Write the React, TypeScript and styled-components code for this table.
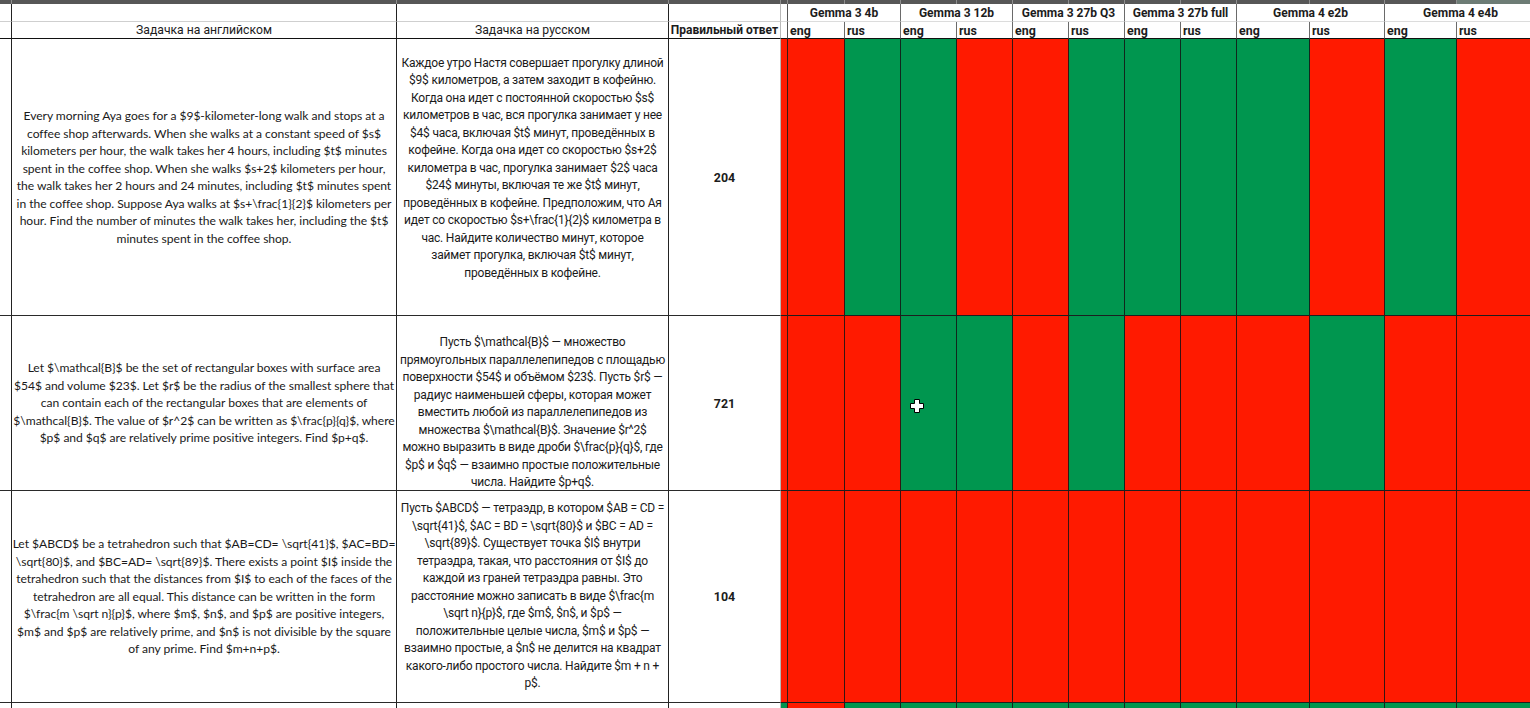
import React from "react";
import styled, { createGlobalStyle } from "styled-components";

const RED = "#ff1a00";
const GREEN = "#00964f";

const GlobalStyle = createGlobalStyle`
  html, body {
    margin: 0;
    padding: 0;
    background: #ffffff;
    overflow: hidden;
  }
  #root {
    width: 1530px;
    height: 708px;
    overflow: hidden;
  }
`;

// column widths, each includes its own 1px right border
const COLS = [12, 385, 272, 112, 7, 57, 56, 56, 56, 56, 56, 56, 56, 73, 75, 72, 80];

const Sheet = styled.div`
  position: relative;
  display: grid;
  grid-template-columns: ${COLS.map((w) => w + "px").join(" ")};
  grid-template-rows: 4px 18px 17px 277px 175px 212px 40px;
  width: max-content;
  color: #1c1c1c;
  font-family: "Roboto", "Liberation Sans", sans-serif;
  font-size: 12.2px;
`;

const Ruler = styled.div<{ $active?: boolean }>`
  background: ${(p) => (p.$active ? "#6d7c75" : "#575757")};
  border-right: 1px solid #8e8e8e;
`;

const EdgeCell = styled.div<{ $line?: string }>`
  box-sizing: border-box;
  border-right: 1px solid #222;
  border-bottom: 1px solid ${(p) => p.$line || "#2a2a2a"};
`;

const HeadCell = styled.div<{ $line?: string; $bold?: boolean; $edge?: string }>`
  box-sizing: border-box;
  display: flex;
  align-items: center;
  justify-content: center;
  white-space: nowrap;
  overflow: hidden;
  font-weight: ${(p) => (p.$bold ? 700 : 400)};
  font-size: ${(p) => (p.$bold ? "12px" : "12.2px")};
  border-right: 1px solid ${(p) => p.$edge || "#222"};
  border-bottom: 1px solid ${(p) => p.$line || "#cfcfcf"};
`;

const GroupCell = styled.div`
  box-sizing: border-box;
  grid-column: span 2;
  display: flex;
  align-items: center;
  justify-content: center;
  white-space: nowrap;
  font-weight: 700;
  font-size: 12px;
  border-right: 1px solid #6a6a6a;
  border-bottom: 1px solid #dcdcdc;
`;

const SubCell = styled.div`
  box-sizing: border-box;
  display: flex;
  align-items: center;
  padding-left: 2px;
  font-weight: 700;
  font-size: 12.4px;
  border-right: 1px solid #6a6a6a;
  border-bottom: 1px solid #111;
`;

const TextCell = styled.div<{ $lang: "en" | "ru"; $offset?: number }>`
  box-sizing: border-box;
  display: flex;
  flex-direction: column;
  align-items: center;
  justify-content: center;
  overflow: hidden;
  text-align: center;
  line-height: 17.5px;
  font-family: ${(p) =>
    p.$lang === "en"
      ? `"Lato", "Carlito", "Liberation Sans", sans-serif`
      : `"Roboto", "Liberation Sans", sans-serif`};
  font-size: ${(p) => (p.$lang === "en" ? "12.1px" : "12px")};
  letter-spacing: ${(p) => (p.$lang === "en" ? "-0.04px" : "-0.2px")};
  color: #1a1a1a;
  padding-top: ${(p) => Math.max(0, (p.$offset || 0) * 2)}px;
  padding-bottom: ${(p) => Math.max(0, -(p.$offset || 0) * 2)}px;
  border-right: 1px solid #222;
  border-bottom: 1px solid #2a2a2a;
`;

const Line = styled.span`
  display: block;
  white-space: nowrap;
`;

const AnswerCell = styled.div`
  box-sizing: border-box;
  display: flex;
  align-items: center;
  justify-content: center;
  font-weight: 700;
  font-size: 12.4px;
  border-right: 1px solid #b9b9b9;
  border-bottom: 1px solid #2a2a2a;
`;

const MarkCell = styled.div<{ $ok: boolean }>`
  box-sizing: border-box;
  background: ${(p) => (p.$ok ? GREEN : RED)};
  border-right: 1px solid #3a1a12;
  border-bottom: 1px solid #1e1e1e;
`;

const ResultCell = styled.div<{ $ok: boolean }>`
  box-sizing: border-box;
  background: ${(p) => (p.$ok ? GREEN : RED)};
  border-right: 1px solid rgba(20, 20, 20, 0.85);
  border-bottom: 1px solid #1e1e1e;
`;

const Cursor = styled.svg`
  position: absolute;
  left: 909px;
  top: 398px;
  width: 16px;
  height: 16px;
  pointer-events: none;
`;

const models = [
  "Gemma 3 4b",
  "Gemma 3 12b",
  "Gemma 3 27b Q3",
  "Gemma 3 27b full",
  "Gemma 4 e2b",
  "Gemma 4 e4b",
];

type Task = {
  en: string[];
  ru: string[];
  ruOffset?: number;
  answer: string;
  mark: boolean;
  results: number[];
};

const tasks: Task[] = [
  {
    en: [
      "Every morning Aya goes for a $9$-kilometer-long walk and stops at a",
      "coffee shop afterwards. When she walks at a constant speed of $s$",
      "kilometers per hour, the walk takes her 4 hours, including $t$ minutes",
      "spent in the coffee shop. When she walks $s+2$ kilometers per hour,",
      "the walk takes her 2 hours and 24 minutes, including $t$ minutes spent",
      "in the coffee shop. Suppose Aya walks at $s+\\frac{1}{2}$ kilometers per",
      "hour. Find the number of minutes the walk takes her, including the $t$",
      "minutes spent in the coffee shop.",
    ],
    ru: [
      "Каждое утро Настя совершает прогулку длиной",
      "$9$ километров, а затем заходит в кофейню.",
      "Когда она идет с постоянной скоростью $s$",
      "километров в час, вся прогулка занимает у нее",
      "$4$ часа, включая $t$ минут, проведённых в",
      "кофейне. Когда она идет со скоростью $s+2$",
      "километра в час, прогулка занимает $2$ часа",
      "$24$ минуты, включая те же $t$ минут,",
      "проведённых в кофейне. Предположим, что Ая",
      "идет со скоростью $s+\\frac{1}{2}$ километра в",
      "час. Найдите количество минут, которое",
      "займет прогулка, включая $t$ минут,",
      "проведённых в кофейне.",
    ],
    ruOffset: -8.5,
    answer: "204",
    mark: false,
    results: [0, 1, 1, 0, 0, 1, 1, 1, 1, 0, 1, 0],
  },
  {
    en: [
      "Let $\\mathcal{B}$ be the set of rectangular boxes with surface area",
      "$54$ and volume $23$. Let $r$ be the radius of the smallest sphere that",
      "can contain each of the rectangular boxes that are elements of",
      "$\\mathcal{B}$. The value of $r^2$ can be written as $\\frac{p}{q}$, where",
      "$p$ and $q$ are relatively prime positive integers. Find $p+q$.",
    ],
    ru: [
      "Пусть $\\mathcal{B}$ — множество",
      "прямоугольных параллелепипедов с площадью",
      "поверхности $54$ и объёмом $23$. Пусть $r$ —",
      "радиус наименьшей сферы, которая может",
      "вместить любой из параллелепипедов из",
      "множества $\\mathcal{B}$. Значение $r^2$",
      "можно выразить в виде дроби $\\frac{p}{q}$, где",
      "$p$ и $q$ — взаимно простые положительные",
      "числа. Найдите $p+q$.",
    ],
    ruOffset: 10,
    answer: "721",
    mark: false,
    results: [0, 0, 1, 1, 0, 1, 0, 0, 0, 1, 0, 0],
  },
  {
    en: [
      "Let $ABCD$ be a tetrahedron such that $AB=CD= \\sqrt{41}$, $AC=BD=",
      "\\sqrt{80}$, and $BC=AD= \\sqrt{89}$. There exists a point $I$ inside the",
      "tetrahedron such that the distances from $I$ to each of the faces of the",
      "tetrahedron are all equal. This distance can be written in the form",
      "$\\frac{m \\sqrt n}{p}$, where $m$, $n$, and $p$ are positive integers,",
      "$m$ and $p$ are relatively prime, and $n$ is not divisible by the square",
      "of any prime. Find $m+n+p$.",
    ],
    ru: [
      "Пусть $ABCD$ — тетраэдр, в котором $AB = CD =",
      "\\sqrt{41}$, $AC = BD = \\sqrt{80}$ и $BC = AD =",
      "\\sqrt{89}$. Существует точка $I$ внутри",
      "тетраэдра, такая, что расстояния от $I$ до",
      "каждой из граней тетраэдра равны. Это",
      "расстояние можно записать в виде $\\frac{m",
      "\\sqrt n}{p}$, где $m$, $n$, и $p$ —",
      "положительные целые числа, $m$ и $p$ —",
      "взаимно простые, а $n$ не делится на квадрат",
      "какого-либо простого числа. Найдите $m + n +",
      "p$.",
    ],
    answer: "104",
    mark: false,
    results: [0, 0, 0, 0, 0, 0, 0, 0, 0, 0, 0, 0],
  },
  {
    en: [],
    ru: [],
    answer: "",
    mark: true,
    results: [0, 1, 1, 1, 1, 1, 1, 1, 1, 1, 1, 1],
  },
];

const TaskRow: React.FC<{ task: Task }> = ({ task }) => (
  <>
    <EdgeCell />
    <TextCell $lang="en">
      {task.en.map((l, i) => (
        <Line key={i}>{l}</Line>
      ))}
    </TextCell>
    <TextCell $lang="ru" $offset={task.ruOffset}>
      {task.ru.map((l, i) => (
        <Line key={i}>{l}</Line>
      ))}
    </TextCell>
    <AnswerCell>{task.answer}</AnswerCell>
    <MarkCell $ok={task.mark} />
    {task.results.map((r, i) => (
      <ResultCell key={i} $ok={r === 1} />
    ))}
  </>
);

export default function App() {
  return (
    <>
      <GlobalStyle />
      <Sheet>
        {COLS.map((_, i) => (
          <Ruler key={i} $active={i === COLS.length - 1} />
        ))}

        <EdgeCell $line="#cfcfcf" />
        <HeadCell />
        <HeadCell />
        <HeadCell $edge="#b9b9b9" />
        <HeadCell $edge="#555" $line="#dcdcdc" />
        {models.map((m) => (
          <GroupCell key={m}>{m}</GroupCell>
        ))}

        <EdgeCell $line="#111" />
        <HeadCell $line="#111">Задачка на английском</HeadCell>
        <HeadCell $line="#111">Задачка на русском</HeadCell>
        <HeadCell $line="#111" $bold $edge="#b9b9b9">
          Правильный ответ
        </HeadCell>
        <HeadCell $line="#111" $edge="#555" />
        {models.map((m) => (
          <React.Fragment key={m}>
            <SubCell>eng</SubCell>
            <SubCell>rus</SubCell>
          </React.Fragment>
        ))}

        {tasks.map((t, i) => (
          <TaskRow key={i} task={t} />
        ))}

        <Cursor viewBox="0 0 16 16">
          <path
            d="M5.5 1.5h5v4h4v5h-4v4h-5v-4h-4v-5h4z"
            fill="#ffffff"
            stroke="#000000"
            strokeWidth="1"
            strokeLinejoin="miter"
          />
        </Cursor>
      </Sheet>
    </>
  );
}
